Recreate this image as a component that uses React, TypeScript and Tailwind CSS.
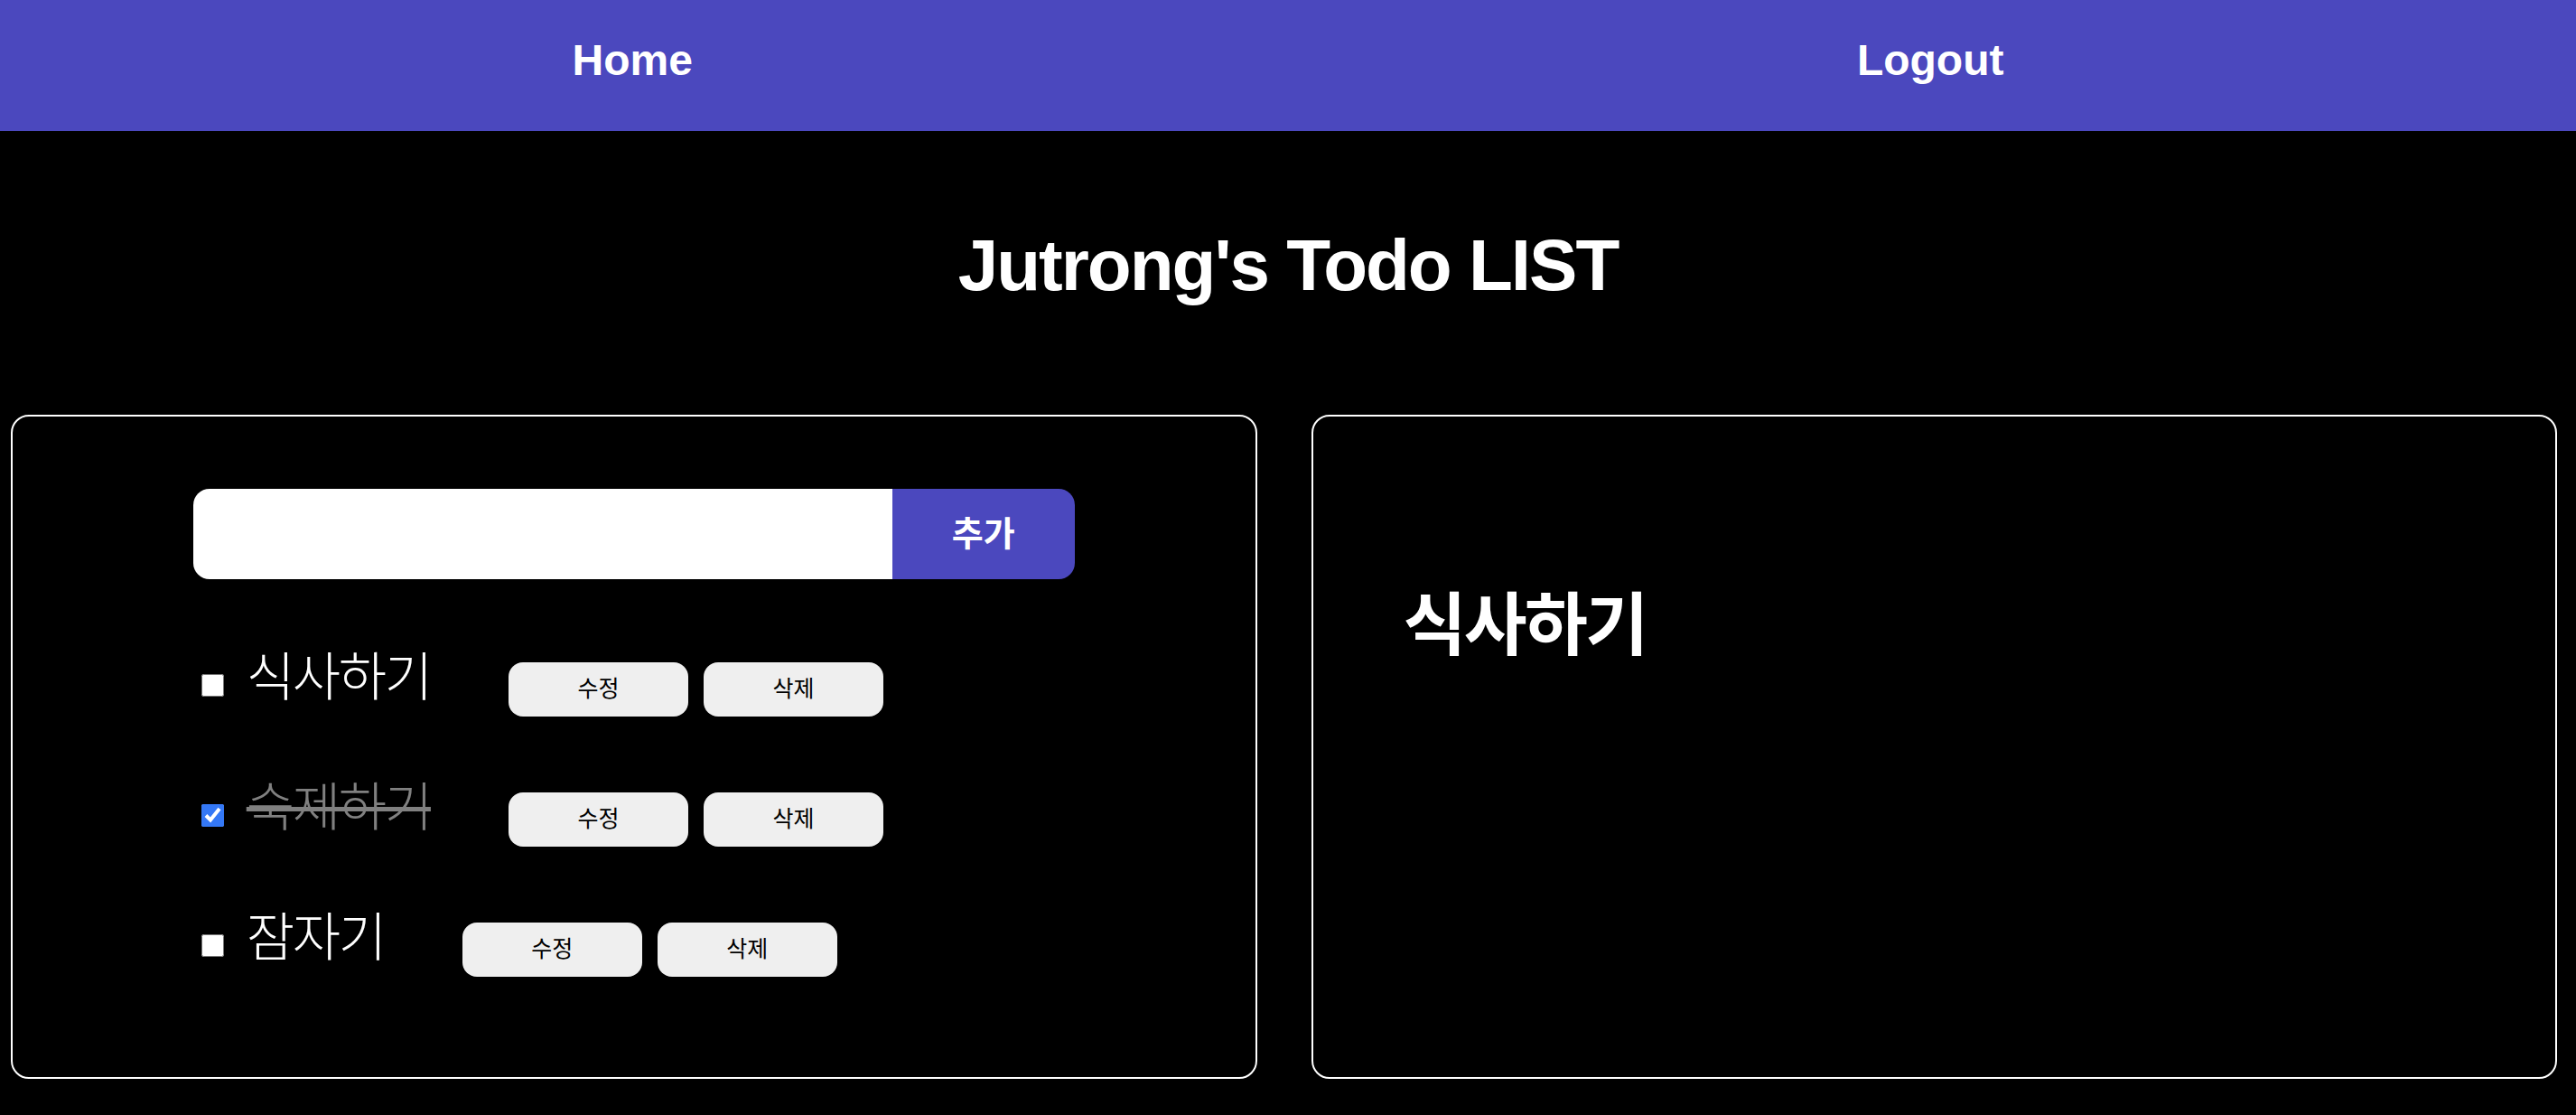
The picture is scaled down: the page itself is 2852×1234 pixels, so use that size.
import React from "react";

const FONT = { fontFamily: '"Liberation Sans", "Noto Sans CJK KR", sans-serif' };

type Todo = { text: string; done: boolean };

const todos: Todo[] = [
  { text: "식사하기", done: false },
  { text: "숙제하기", done: true },
  { text: "잠자기", done: false },
];

function Row({ todo }: { todo: Todo }) {
  return (
    <li className="flex items-center h-[144px]">
      <input
        type="checkbox"
        defaultChecked={todo.done}
        className="ml-[9px] mb-[10px] w-[25px] h-[25px] accent-[#3478f6]"
      />
      <span
        className={
          "ml-[25px] mb-[27px] text-[58px] leading-none font-light tracking-[-0.04em] " +
          (todo.done ? "text-[#808080] line-through decoration-[#808080]" : "text-white")
        }
      >
        {todo.text}
      </span>
      <button className="ml-[86px] w-[199px] h-[60px] rounded-[16px] bg-[#efefef] text-black text-[25px]">
        수정
      </button>
      <button className="ml-[17px] w-[199px] h-[60px] rounded-[16px] bg-[#efefef] text-black text-[25px]">
        삭제
      </button>
    </li>
  );
}

export default function App() {
  return (
    <div className="min-h-[1234px] bg-black text-white" style={FONT}>
      <nav className="h-[145px] bg-[#4b48be] flex justify-around items-start pt-[43px]">
        <a className="mr-[22px] text-[48px] leading-none font-bold text-white">Home</a>
        <a className="text-[48px] leading-none font-bold text-white">Logout</a>
      </nav>
      <h1 className="mt-[109px] text-center text-[80px] leading-none font-bold tracking-[-0.025em]">
        Jutrong's Todo LIST
      </h1>
      <main className="mt-[125px] grid grid-cols-2 gap-[60px] pl-[12px] pr-[21px]">
        <section className="h-[735px] border-2 border-white rounded-[20px] pt-[80px]">
          <div className="w-[976px] mx-auto">
            <form className="flex h-[100px]" onSubmit={(e) => e.preventDefault()}>
              <input className="flex-1 min-w-0 bg-white rounded-l-[18px] outline-none px-4 text-black text-[32px]" />
              <button className="w-[202px] bg-[#4b48be] rounded-r-[18px] text-white font-bold text-[38px]">
                추가
              </button>
            </form>
            <ul className="mt-[50px]">
              {todos.map((t) => (
                <Row key={t.text} todo={t} />
              ))}
            </ul>
          </div>
        </section>
        <section className="h-[735px] border-2 border-white rounded-[20px] pt-[194px] pl-[100px]">
          <h2 className="text-[76px] leading-none font-bold tracking-[-0.035em]">식사하기</h2>
        </section>
      </main>
    </div>
  );
}
